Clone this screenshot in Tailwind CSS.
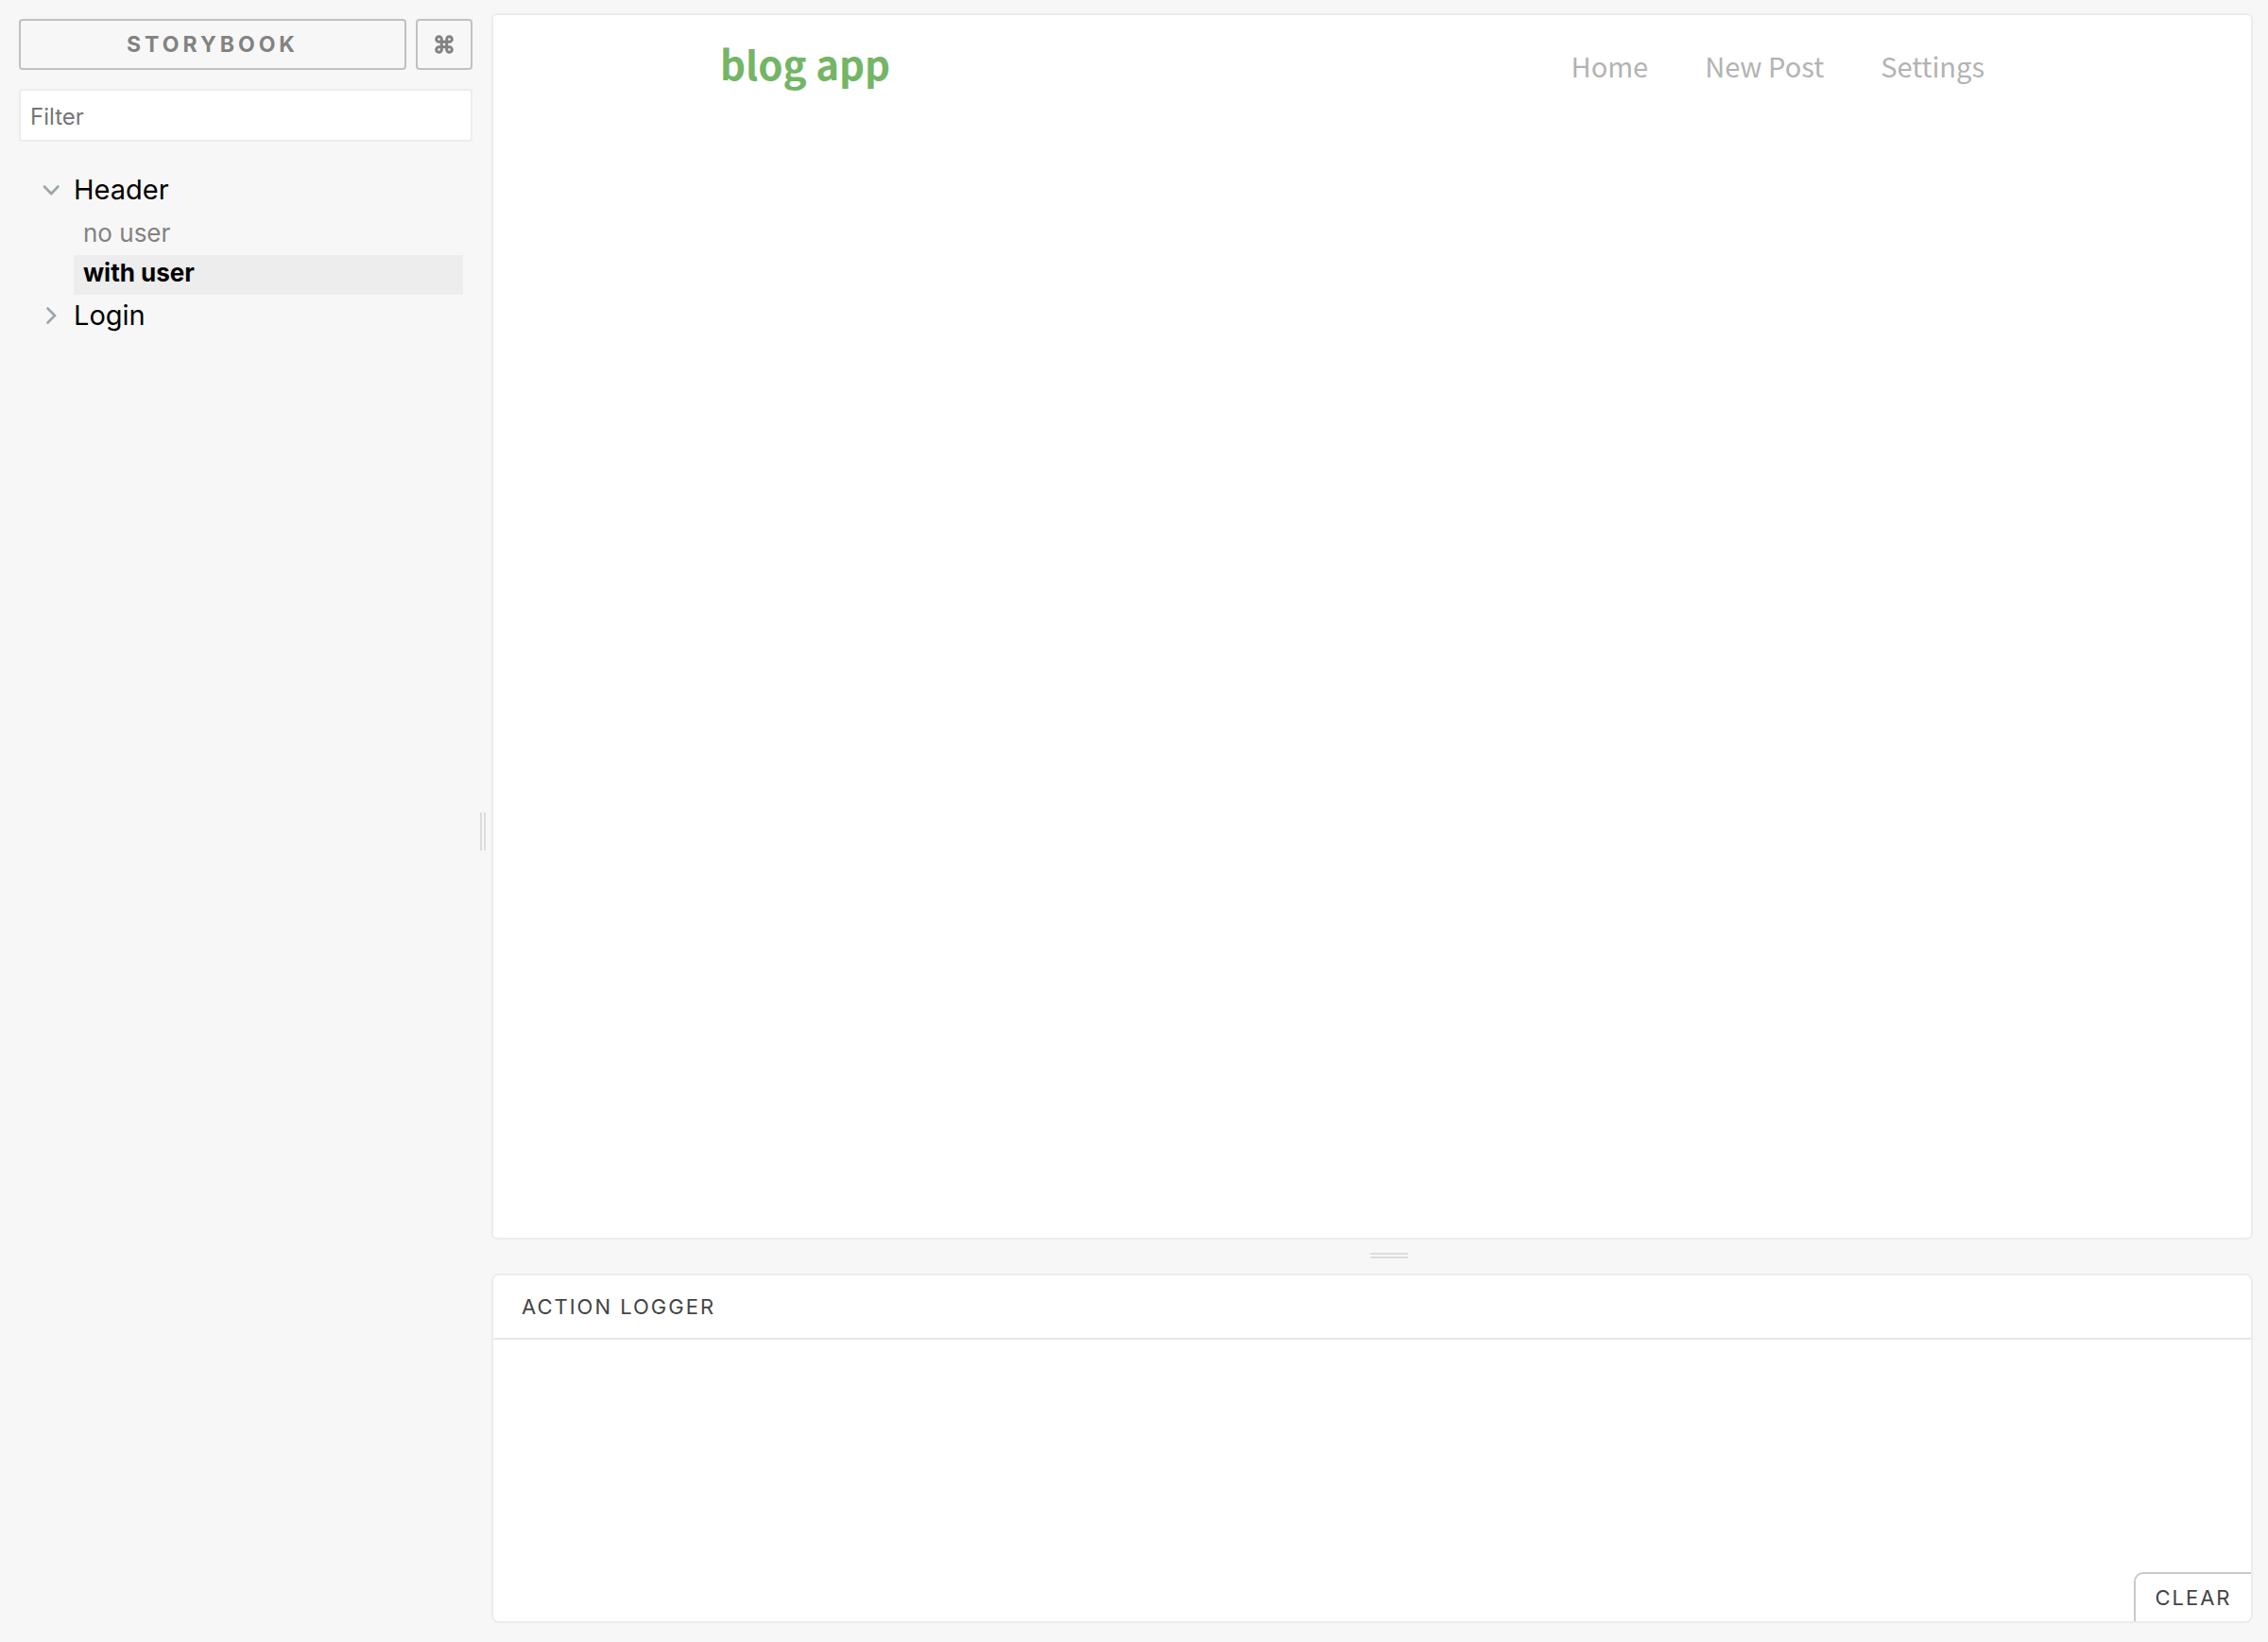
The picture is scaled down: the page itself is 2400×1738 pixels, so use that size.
<!DOCTYPE html>
<html lang="en">
<head>
<meta charset="utf-8">
<title>Storybook</title>
<script src="https://cdn.jsdelivr.net/npm/@tailwindcss/browser@4"></script>
</head>
<body class="flex h-screen bg-[#f7f7f7] font-[Inter,sans-serif] text-black">
  <aside class="flex w-[500px] shrink-0 flex-col py-5 pl-5">
    <div class="flex gap-2.5">
      <a href="#" class="flex h-[54px] flex-1 items-center justify-center rounded-sm border-2 border-[#c1c1c1] text-[23px] font-bold tracking-[4px] text-[#828282]">STORYBOOK</a>
      <button type="button" aria-label="Keyboard shortcuts" class="flex h-[54px] w-[60px] items-center justify-center rounded-sm border-2 border-[#c1c1c1] text-[#828282]">
        <svg class="size-5" viewBox="0 0 20 20" fill="none" stroke="currentColor" stroke-width="3"><path d="M7.3 7.3V4.6A2.8 2.8 0 1 0 4.6 7.3H15.4A2.8 2.8 0 1 0 12.7 4.6V15.4A2.8 2.8 0 1 0 15.4 12.7H4.6A2.8 2.8 0 1 0 7.3 15.4Z"/></svg>
      </button>
    </div>
    <input type="text" aria-label="Filter" placeholder="Filter" class="mt-5 h-14 w-full rounded-sm border-2 border-[#ececec] bg-white px-2.5 pt-0.5 text-[24px] placeholder:text-[#757575] focus:outline-none">
    <nav class="mt-7 pr-2.5 pl-6" aria-label="Stories">
      <ul>
        <li>
          <a href="#" class="flex h-[46px] items-center gap-3.5 text-[29px]">
            <svg class="size-5 shrink-0" viewBox="0 0 20 20" fill="none" stroke="#9da5ab" stroke-width="2.6" stroke-linecap="round"><path d="M3 6.5l7.2 7.5 7.2-7.5"/></svg>
            Header
          </a>
          <ul class="ml-[34px] text-[26px] leading-[38px]">
            <li><a href="#" class="mt-0.5 block h-11 px-2.5 pt-0.5 text-[#828282]">no user</a></li>
            <li><a href="#" class="block h-[42px] bg-[#ededed] px-2.5 font-bold">with user</a></li>
          </ul>
        </li>
        <li>
          <a href="#" class="flex h-[44px] items-center gap-3.5 text-[29px]">
            <svg class="size-5 shrink-0" viewBox="0 0 20 20" fill="none" stroke="#9da5ab" stroke-width="2.6" stroke-linecap="round"><path d="M6.5 2.5l7.5 7.5-7.5 7.5"/></svg>
            Login
          </a>
        </li>
      </ul>
    </nav>
  </aside>
  <div class="flex w-5 shrink-0 cursor-col-resize items-center pt-[22px] pl-2" role="separator" aria-orientation="vertical">
    <div class="h-10 w-1.5 border-x-2 border-[#dcdcdc]"></div>
  </div>
  <div class="flex min-w-0 flex-1 flex-col pt-3.5 pr-4 pb-5">
    <main class="min-h-0 flex-1 rounded-md border-2 border-[#ececec] bg-white">
      <header class="flex h-[106px] items-center justify-between pr-[282px] pl-[240px] font-['Noto_Sans_CJK_SC',sans-serif]">
        <a href="#" class="pb-1 text-[42px] leading-[60px] font-bold text-[#74b566]">blog app</a>
        <nav class="flex gap-[60px] text-[29px] leading-10 text-[#b3b3b3]">
          <a href="#">Home</a>
          <a href="#">New Post</a>
          <a href="#">Settings</a>
        </nav>
      </header>
    </main>
    <div class="flex h-9 shrink-0 cursor-row-resize justify-center pt-3.5 pl-9" role="separator" aria-orientation="horizontal">
      <div class="h-1.5 w-10 border-y-2 border-[#dcdcdc]"></div>
    </div>
    <section class="flex h-[370px] shrink-0 flex-col overflow-hidden rounded-lg border-2 border-[#ececec] bg-white text-[22px] text-[#444]">
      <h2 class="flex h-[68px] items-center border-b-2 border-[#e8e8e8] px-[30px] tracking-[2px]">ACTION LOGGER</h2>
      <button type="button" class="mt-auto flex h-[52px] w-[124px] items-center justify-center self-end rounded-tl-[10px] border-t-2 border-l-2 border-[#c9c9c9] tracking-[2px]">CLEAR</button>
    </section>
  </div>
</body>
</html>
